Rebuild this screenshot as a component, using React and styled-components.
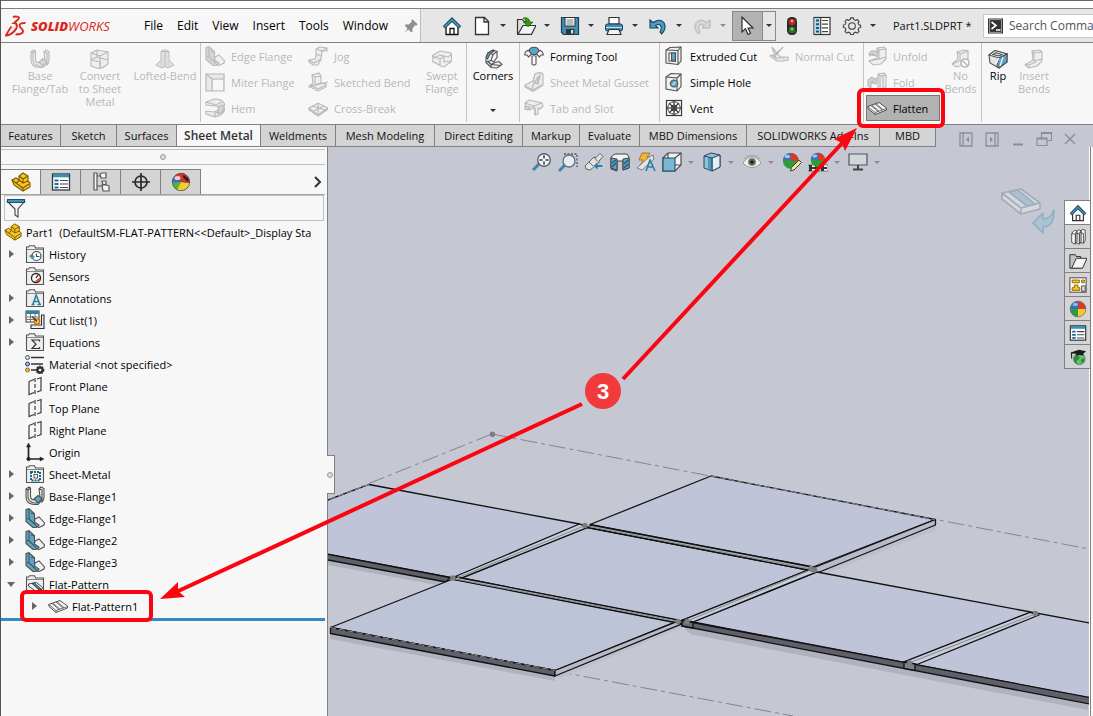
import React from 'react'
import styled, { createGlobalStyle } from 'styled-components'

const LINE = '#808080'
const VIEW = '#c5c8d2'

/* ---------- icons, all on a 20 x 20 grid ---------- */

const icons = {
  home: <g><path d="M4 10v8.500h12V10L10 5z" fill="#fff" stroke="currentColor" strokeWidth="1.300" /><path d="M8 18v-5.500h4V18" fill="none" stroke="currentColor" strokeWidth="1.300" /><path d="M2 11.500L10 3.500l8 8" fill="none" stroke="#1c4f68" strokeWidth="3.600" /><path d="M2.500 11L10 3.700l7.500 7.300" fill="none" stroke="#4f9dc0" strokeWidth="1.400" /></g>,
  page: <path d="M3.500 1.500h9l4 4v13h-13zM12 1.500V6h4.500" fill="#fff" stroke="currentColor" strokeWidth="1.300" />,
  open: <g><path d="M1.500 18V3.500h5l1.500 2h5V18z" fill="#ddd" stroke="currentColor" strokeWidth="1.200" /><path d="M2 18.300L7 9.500h13l-4.500 8.800z" fill="#f4f4f4" stroke="currentColor" strokeWidth="1.200" /><path d="M7 2c4-1 6.500.5 7 4h3l-5 5-4.500-5H10c0-2-1-3-3-4z" fill="#2e9a10" stroke="#145c05" strokeWidth=".6" /></g>,
  save: <g><path d="M1.500 1.500h17v17h-15l-2-2z" fill="#3f8fb8" stroke="#1b3c50" strokeWidth="1.200" /><rect x="5" y="1.500" width="10" height="8.500" fill="#fff" stroke="#333" /><path d="M6.500 4h7M6.500 6h7M6.500 8h7" stroke="#777" /><rect x="6" y="13" width="8.500" height="5.500" fill="#333" /><rect x="11" y="14" width="2.200" height="3.500" fill="#ddd" /></g>,
  print: <g><path d="M5 8V1.500h10V8z" fill="#fff" stroke="#333" strokeWidth="1.200" /><rect x="1.500" y="8" width="17" height="7" rx="2" fill="#3f8fb8" stroke="#1b3c50" /><path d="M2 11.500h16" stroke="#bfe2f0" /><path d="M5 13.500h10l2 5H3z" fill="#f4f4f4" stroke="#333" strokeWidth="1.200" /></g>,
  undo: <path d="M2 4v8h8L7.500 9.500C12 7 15 10 12 16l1.500 2C20 12 17 3 9 4.500L5 6.500z" fill="#4a9cc4" stroke="#16435c" strokeWidth="1.100" />,
  redo: <path d="M18 4v8h-8l2.500-2.500C8 7 5 10 8 16l-1.500 2C0 12 3 3 11 4.500l4 2z" fill="#d6d6d6" stroke="#b2b2b2" />,
  cursor: <path d="M5 1v15l3.500-3.300L11 18.500l2.500-1.200L11 12h5z" fill="#fff" stroke="#222" strokeWidth="1.100" />,
  light: <g><rect x="5" y="1" width="10" height="18" rx="4.500" fill="#2b2b2b" /><circle cx="10" cy="6" r="3.300" fill="#c22a1c" /><circle cx="10" cy="5" r="1.300" fill="#ff9b8c" /><circle cx="10" cy="14" r="3.300" fill="#2d7a1f" /><circle cx="10" cy="13" r="1.200" fill="#8fdc76" /></g>,
  options: <g><rect x="2" y="1.500" width="16" height="17" fill="#fff" stroke="#333" strokeWidth="1.200" /><rect x="2.500" y="2" width="6" height="16" fill="#b8d9e8" /><path d="M4 4.500h3M4 8.200h3M4 11.900h3M4 15.600h3" stroke="#14577a" strokeWidth="2" /><path d="M10 4.500h6M10 8.200h6M10 11.900h6M10 15.600h6M8.700 2v16" stroke="#444" strokeWidth="1.200" /></g>,
  gear: <g fill="none" stroke="#444" strokeWidth="1.200" transform="translate(1 1) scale(.9)"><path d="M8.500 1h3l.5 2 2 .8 1.800-1 2 2-1 1.800.8 2 2 .4v2.600l-2 .6-.8 2 1 1.700-2 2-1.800-1-2 .8-.5 1.800h-3l-.5-1.800-2-.8-1.800 1-2-2 1-1.800-.8-2-2-.5V9l2-.5.8-2-1-1.800 2-2 1.800 1 2-.8z" /><circle cx="10" cy="10" r="3.700" /></g>,
  pin: <path d="M11.500 2.500l6 5.500-1.500 1.500-1.500-.3-3 3.800.2 3-1.500 1L7 13.800 3 17.500l3-4.600L3 9.500 4.500 8l3 .2L11 5l-.7-1.500z" fill="#8f8f8f" />,
  prompt: <g><rect x="1" y="2.500" width="15" height="15" fill="#333" /><rect x="2.300" y="3.800" width="12.400" height="12.400" fill="#333" stroke="#fff" strokeWidth=".5" /><path d="M4.500 6l4.500 3.500L4.500 13M9 14h4.500" fill="none" stroke="#fff" strokeWidth="1.600" /></g>,
  base: <g fill="#eee" stroke="currentColor" strokeWidth="1.100"><path d="M1 3l3-2 1.500 1v8c0 2 1.500 4 4.500 4l3-3 4 3-4 4.500H9C4 18 1 15 1 11z" /><path d="M1 3l2 1v7c0 3 2 5 6 6h4" fill="none" /><path d="M14 3l2-2 3 1.500V11c0 2-1 4-2 5v-3l-2-2z" /><path d="M14 3l3 1v8M5.500 2L3 4" fill="none" /><path d="M9 13l4-3.500 4 3-4 4.500z" fill="var(--accent)" /></g>,
  convert: <g fill="#eee" stroke="currentColor" strokeWidth="1.100"><path d="M1 4l6-3 11 2v12l-6 4-2-1v-5l-9-2z" /><path d="M1 4l9 3 8-4M10 7v11M1 11l6-3 11 3M7 1v7" fill="none" /><path d="M1 12v5l9 3v-6" /></g>,
  loft: <g fill="#e2e2e2" stroke="currentColor" strokeWidth="1"><path d="M6 2.500h8V11l5 5-6 3-3-1.500L7 19l-6-3 5-5z" /><path d="M6 2.500c1-2 7-2 8 0M10 3v14" fill="none" /><path d="M7 3l-2 14h3zM13 3l2 14h-3z" fill="var(--accent)" stroke="none" /></g>,
  edge: <g stroke="currentColor" strokeWidth="1.100"><path d="M10 11l4-2 5.500 6-.5 2-5 2.500-5-3z" fill="#f1f1f1" /><path d="M1 1.500L4 .7l5.500 5V14l4.500 3-2 2.300-4 .2-7-6z" fill="var(--accent)" /><path d="M4 1v10l5.500 5L12 19M1.500 11l3-1M9.500 6L6 5" fill="none" /></g>,
  miter: <g stroke="currentColor" strokeWidth="1.200"><path d="M1 2h18v17H1z" fill="#e9e9e9" /><path d="M1 2l6 5h12M7 7v12" fill="none" /><path d="M8 8h10v10H8z" fill="var(--paper)" stroke="none" /></g>,
  hem: <g stroke="currentColor" strokeWidth="1.100"><path d="M1 4l8-3c7 0 11 3 11 8s-4 9-10 10L1 16v-3l8 1c5-1 6-5 2-6L1 7z" fill="#ececec" /><path d="M1 4l10 3 6-3M10 19v-4c8-1 9-5 7-8" fill="none" /><path d="M14 8l4-1c2 4-1 8-5 9z" fill="var(--accent)" /></g>,
  jog: <g stroke="currentColor" strokeWidth="1.100" fill="#eee"><path d="M8 3l4-2 7 1v3h-5l-1 8-3 6H5l-4-3v-2l6-1 1-3z" /><path d="M8 3l6 2M8 8l5 2M1 14l5 3 7-4M14 5l5-3" fill="none" /></g>,
  bend: <g stroke="currentColor" strokeWidth="1.100" fill="#eee"><path d="M4 3l7-2 2 3v7l5 1v3l-8 4-8-4v-2l3-1z" /><path d="M4 3l3 2 6-1M7 5v8l6-2M2 13l8 4 8-4M0 15l20-5" fill="none" /></g>,
  cross: <g stroke="currentColor" strokeWidth="1.100" fill="#eee"><path d="M1 10l9-5 10 5-10 7z" /><path d="M1 10v2l9 6 10-7v-1M10 5v12M4 8l13 4M16 8L6 13" fill="none" /></g>,
  swept: <g stroke="currentColor" strokeWidth="1.100" fill="#eee"><path d="M0 7l8-5 11 2 1 8-8 6-3-1-9-5z" /><path d="M0 7l8 3 4-3 4 1 4-3M8 10v7M12 7v6l8-1M0 10l8-4 4 1" fill="none" /></g>,
  corners: <g stroke="currentColor" strokeWidth="1.100"><path d="M5 4l5-3 4 1.500L10 5.500l-2 6 4 2 4-1 3 3-5 3.500-6-.5-5-5V9z" fill="#f0f0f0" /><path d="M10 5.500L7 4.500M8 11.500l-5 1.500M12 13.500l-4 2M8 15.500l-3-3M8 15.500V18M8 15.500l10 1M14 2.500v6l-3 4" fill="none" /><path d="M3 8l2-4 5-3 1 1-4 3-2.500 5z" fill="var(--accent)" /></g>,
  forming: <g stroke="currentColor" strokeWidth="1.100"><path d="M.7 9c0-3 2.300-5 5-4.500L8 8l-2 1.500-1.500 1.500L3 9zM19.300 9c0-3-2.300-5-5-4.500L12 8l2 1.500 1.500 1.500L17 9z" fill="#f5f5f5" /><path d="M5 5c1-5 9-5 10 0l-3 3.500H8z" fill="var(--accent)" /><path d="M8 10.500c1-1 3-1 4 0V18c-1 1.300-3 1.300-4 0z" fill="#fafafa" /></g>,
  gusset: <g stroke="currentColor" strokeWidth="1.100"><path d="M1 13l8-4 2-7 5-2 3 2v11l-9 6H8l-7-4z" fill="#eaeaea" /><path d="M8 19l1-6 7-9v-3M1 14l8 4 9-5M9 9l5 2 2-7" fill="none" /><path d="M10 11l4-6v7z" fill="var(--accent)" /></g>,
  slot: <g stroke="currentColor" strokeWidth="1.100"><path d="M1 5l4-3 13 3 1 3-3 3-2-1v6l-3 1v-7l-2-1-3 3-4-2z" fill="#eee" /><path d="M1 5l9 3 8-3M10 8v4M11 17v-6" fill="none" /><path d="M1 8l5 1-2 3-3-1z" fill="var(--accent)" /></g>,
  cut: <g stroke="currentColor" strokeWidth="1.100"><path d="M2 4l4-2.500 11-.5V15l-3 3.500L2 17z" fill="#f1f1f1" /><path d="M2 4l12 .500v14M14 4.500L17 1" fill="none" /><path d="M5 7h6.500v8.500L5 15z" fill="#fff" /><path d="M7.500 7h4v7l-4 .5z" fill="var(--accent)" /></g>,
  hole: <g stroke="currentColor" strokeWidth="1.100"><path d="M2 5l5-3.500L17 2v12.500L13 19 2 17z" fill="#f1f1f1" /><path d="M2 5l11 1v13M13 6l4-4" fill="none" /><ellipse cx="10" cy="11.500" rx="3.700" ry="3.500" fill="var(--accent)" /><path d="M8.500 13l3-3" stroke="#d3ecf6" /></g>,
  vent: <g stroke="#3a3a3a" fill="none"><rect x="2.500" y="2.500" width="15" height="15" strokeWidth="1.200" fill="#fff" /><circle cx="10" cy="10" r="6.200" /><circle cx="10" cy="10" r="3" /><path d="M10 3v14M3 10h14M5 5l10 10M15 5L5 15" strokeWidth="1.200" /></g>,
  normal: <g stroke="currentColor" strokeWidth="1.200" fill="#eee"><path d="M3 1l8 10h8v3l-5 1H8L1 10l2-1 4 3z" /><path d="M11 4l-7 6M14 1L7 9M8 12h8" fill="none" /></g>,
  unfold: <g stroke="currentColor" strokeWidth="1.100" fill="#eee"><path d="M10 2l7-1 2 2v10l-5 5-8 1-4-4 8-3z" /><path d="M10 2l2 2v9l7-2M12 4l7-1M2 15l10-2" fill="none" /><path d="M2 8c2-4 5-4 7-2l2-1-1 5-5-1 2-1c-2-1-3 0-4 2z" fill="var(--accent)" /></g>,
  fold: <g stroke="currentColor" strokeWidth="1.100" fill="#eee"><path d="M11 2l6-1 2 2v12l-5 3h-4l1-3z" /><path d="M11 2l2 2v13M13 4l6-1M16 4v12" fill="none" /><path d="M1 14V8l4-3 2 2 3-1-1 6-4-1 2-2-3 1v6z" fill="var(--accent)" /></g>,
  nobend: <g stroke="currentColor" strokeWidth="1.100" fill="#eee"><path d="M6 3l7-2 4 1v9l-5 5-7 2-4-3 6-5z" /><path d="M6 3l3 2v7l8-2M9 5l8-3M1 15l7-3" fill="none" /><circle cx="14" cy="14" r="4" fill="#fff" strokeWidth="1.600" /><path d="M11 11l6 6" strokeWidth="1.600" /></g>,
  insbend: <g stroke="currentColor" strokeWidth="1.100" fill="#eee"><path d="M8 2l8-1 2 2v9l-5 5-8 2-4-3 8-5z" /><path d="M8 2l2 2v8l8-2M10 4l8-1M1 15l4 1 7-3M5 16v3" fill="none" /></g>,
  rip: <g stroke="currentColor" strokeWidth="1.100"><path d="M1 6l6-4.500L19 5v8l-8 6-9-5z" fill="#e4e4e4" /><path d="M1 6l6-4.500L19 5l-8 4z" fill="#fafafa" /><path d="M5 5.500l3-2 6 2-3 1.500z" fill="#d4d4d4" /><path d="M11 9l8-4v8l-8 6-2-3z" fill="var(--accent)" /><path d="M11 9l-3 6M15 8l-3 9" fill="none" stroke="#fff" /></g>,
  flat: <g stroke="currentColor"><path d="M.7 8.500L12 4.500l7.500 5.500v2L8 16.500 1 10.500z" fill="#f7f7f7" /><path d="M8 14.500l11.500-4M.7 8.500L8 14.500v2M4 7.500l7 6M5 7.200l7 6M8 6l7 6M9 5.600l7 6" fill="none" strokeWidth=".8" /></g>,
  part: <g stroke="#7a5600" strokeWidth="1.100"><path d="M1 8l4-2 3 2V4l4-3 5 3v5l2 2v4l-7 4-9-6z" fill="#f6c622" /><path d="M5 11l7 5 6-4M12 16v3M12 7l5-3M12 7v4l5-2M8 4l4 3M1 8l4 3 3-2M12 11l-4-3" fill="none" /></g>,
  sheet: <g><rect x="1.500" y="2" width="17" height="16" fill="#fff" stroke="#2b3a42" strokeWidth="1.300" /><path d="M2 3.800h16" stroke="#3e8cb0" strokeWidth="3" /><path d="M3.500 8.500h4M3.500 12h4M3.500 15.500h4" stroke="#1e6d94" strokeWidth="2" /><path d="M9 8.500h8M9 12h8M9 15.500h8" stroke="#444" strokeWidth="1.200" /></g>,
  config: <g fill="#f4f4f4" stroke="#555" strokeWidth="1.200"><path d="M3 1h3v17H3zM6 4h4M6 14h5" /><path d="M9 2l2-1h4v5h-5zM11 9h4v3l-3 1zM11 13h5l2 1v5h-6z" /></g>,
  target: <g fill="none" stroke="#2a2a2a" strokeWidth="1.700"><circle cx="10" cy="10" r="6" /><path d="M10 1v18M1 10h18" /></g>,
  ball: <g><circle cx="10" cy="10" r="8.700" fill="#eaeaea" /><path d="M10 10V1.300A8.700 8.700 0 0118.700 10z" fill="#d63a2a" /><path d="M10 10H1.300A8.700 8.700 0 0110 1.300z" fill="#2c6fc4" /><path d="M10 10v8.700A8.700 8.700 0 011.300 10z" fill="#2e9c38" /><path d="M10 10h8.700A8.700 8.700 0 0110 18.700z" fill="#f2cc2c" /><ellipse cx="7" cy="5" rx="3" ry="2" fill="#fff" opacity=".5" /><circle cx="10" cy="10" r="8.700" fill="none" stroke="#444" strokeWidth=".6" /></g>,
  display: <g><circle cx="10" cy="10" r="8.700" fill="#2d5fae" /><path d="M10 10L3 4.500A9 9 0 0114 2z" fill="#d23b30" /><path d="M10 10L3 4.500A9 9 0 001.500 11z" fill="#3a6fc0" /><path d="M10 10L1.500 10.500A9 9 0 006 17.700z" fill="#57b33a" /><path d="M10 10l-4 7.700A8.800 8.800 0 0018.500 11z" fill="#f3cf2b" /><path d="M12 1.600A8.800 8.800 0 0118.600 11L10 10z" fill="#c9352b" /><path d="M12.500 3l5 4-.5 3-5-5z" fill="#201c1c" /><ellipse cx="6.500" cy="6" rx="3" ry="2" fill="#fff" opacity=".75" /><circle cx="10" cy="10" r="8.700" fill="none" stroke="#444" strokeWidth=".6" /></g>,
  funnel: <g stroke="#444" strokeWidth="1.100"><path d="M1.500 3.500h17L12 11v8l-3-2v-6z" fill="#f5f5f5" /><path d="M1.500 1.500h17v3h-17z" fill="#3f92b8" stroke="#1b5270" /></g>,
  material: <g><path d="M6 3.500h13M6 10h12M6 16h6" stroke="#333" strokeWidth="1.500" /><circle cx="2.500" cy="3.500" r="2" fill="#ddd" stroke="#555" /><circle cx="2.500" cy="10" r="2" fill="#8fc6df" stroke="#336" /><circle cx="2.500" cy="16" r="2" fill="#f4c32b" stroke="#864" /><circle cx="15" cy="16" r="3.700" fill="#333" strokeDasharray="1.500 1.200" stroke="#333" strokeWidth="1.400" /><circle cx="15" cy="16" r="1.300" fill="#fff" /></g>,
  plane: <g fill="none" stroke="#3c3c3c" strokeWidth="1.200"><path d="M4 5.500L9 3.500M12 3l4-1.500v13l-4 1.500M9 16.500L4 18.500v-13" /><path d="M10 2v17" strokeDasharray="4 2" /></g>,
  origin: <g stroke="#222" fill="#222"><path d="M3.500 3v14H17" fill="none" strokeWidth="1.700" /><path d="M1.500 5l2-4 2 4zM15 15l4 2-4 2z" strokeWidth=".5" /><circle cx="3.500" cy="17" r="1.600" /></g>,
  cutlist: <g><rect x="1" y="1" width="13" height="11" fill="#fff" stroke="#333" /><path d="M1 2.500h13" stroke="#2f82aa" strokeWidth="3" /><path d="M1 7h13M1 9.500h13M5.500 4v8M10 4v8" stroke="#777" /><path d="M6 15v3.500h13V5h-2.500v10z" fill="#eee" stroke="#333" strokeWidth="1.100" /><circle cx="12" cy="11.500" r="2.700" fill="#f7d33b" stroke="#c46e14" strokeWidth="1.200" /><path d="M7 6.500l5 5" stroke="#333" strokeWidth="1.200" /></g>,
  zoomfit: <g><path d="M1 18l6-6" stroke="#3c84a8" strokeWidth="3" /><circle cx="12" cy="8" r="6.300" fill="#f1f5f8" stroke="#56616a" strokeWidth="1.400" /><path d="M12 3.500v3M12 9.500v3M7.500 8h3M13.500 8h3" stroke="#333" strokeWidth="1.500" /></g>,
  zoomarea: <g><path d="M6 2h13v13" fill="none" stroke="#555" strokeWidth="1.300" strokeDasharray="2 1.500" /><path d="M1 19l6-6" stroke="#3c84a8" strokeWidth="3" /><circle cx="11" cy="9" r="6" fill="#e4edf2" stroke="#67717a" strokeWidth="1.400" /></g>,
  prev: <g><path d="M1 14l9-9 2 .500 4-4 3 3-4 4.500v2l-9 7-4-1z" fill="#e2e2e2" stroke="#666" /><path d="M10 5l5 6M5 10l5 5" stroke="#666" /><path d="M9 14l5-4.500v3h5v3h-5v3z" fill="#317fa8" stroke="#e8eef4" strokeWidth=".6" /></g>,
  section: <g stroke="#444"><path d="M1 5l4-3h12l2 3v11l-6 2V9H7v10l-6-2z" fill="#f2f2f2" /><path d="M1 6l6 1v11l-6-2zM13 7l6-1v10l-6 2z" fill="#5da5c6" /><path d="M2 11l4-3M2 15l4-4M14 12l4-4M14 16l4-4" stroke="#1c5674" strokeWidth="1.300" /></g>,
  dynamic: <g><path d="M6 1h8l-3 4h4L4 14l3-6H3z" fill="#f3b33c" stroke="#a2660e" strokeWidth=".8" /><path d="M1 16l12-11 4-2 1 4L6 18z" fill="#e5e5e5" stroke="#666" strokeWidth=".8" /><path d="M10 19l4-11 5 11M11.500 15h6" fill="none" stroke="#2d7da5" strokeWidth="1.600" /></g>,
  orient: <g><path d="M1 6l5-5h13v12l-6 6H1z" fill="#f4f4f4" stroke="#444" strokeWidth="1.100" /><path d="M13 6l6-5M6 1v5M13 13h6" stroke="#444" strokeWidth="1.100" /><path d="M1 6h12v13H1z" fill="#7ab7d3" stroke="#1e4d66" strokeWidth="1.100" /></g>,
  style: <g stroke="#345"><path d="M2 4l7-3 9 2v12l-8 4-8-3z" fill="#8cc3da" /><path d="M10 6l8-3v12l-8 4z" fill="#dff0f7" /><path d="M6 5l4 1v13l-4-2z" fill="#4d98bd" stroke="none" /><path d="M10 6v13M2 4l8 2" /></g>,
  eye: <g><path d="M1 11c5-8 13-8 18 0-5 6-13 6-18 0z" fill="#eee" stroke="#888" strokeWidth=".8" /><path d="M2 7c5-5 11-5 16 0" fill="none" stroke="#a5a5a5" /><circle cx="10" cy="10" r="3.800" fill="#666" /><circle cx="10" cy="10" r="1.600" fill="#111" /></g>,
  edit: <g><g transform="scale(.88)"><circle cx="10" cy="10" r="9" fill="#2e9c38" /><path d="M10 10L1 9a9 9 0 019-8z" fill="#3a72c4" /><path d="M10 10V1a9 9 0 019 9z" fill="#d63a2a" /><ellipse cx="6" cy="5" rx="3" ry="2" fill="#fff" opacity=".6" /></g><path d="M17 8l2.500 2.500-7.500 7.500-3.500 1 1-3.500z" fill="#f4e29c" stroke="#444" /></g>,
  scene: <g><path d="M0 13h20v6H0z" fill="#fff" stroke="#333" strokeWidth=".6" /><path d="M1 13h3v2h3v-2h3v2h3v-2h3v2h3v2h-3v2h-3v-2h-3v2H7v-2H4v2H1z" fill="#333" /><g transform="translate(2 0) scale(.8)"><circle cx="10" cy="10" r="9" fill="#2e9c38" /><path d="M10 10L1 9a9 9 0 019-8z" fill="#3a72c4" /><path d="M10 10V1a9 9 0 019 9z" fill="#d63a2a" /><ellipse cx="6" cy="5" rx="3" ry="2" fill="#fff" opacity=".6" /></g></g>,
  monitor: <g stroke="#555" strokeWidth="1.200"><path d="M1 2h18v11H1z" fill="#d0d6dc" /><path d="M10 13v4M5 17.500h10" strokeWidth="2" stroke="#444" /></g>,
  books: <g fill="#fafafa" stroke="#444"><path d="M3 6l3-3.500 3 1V15l-2 3-4-2zM7.500 5.500l3-3.500 3 1v12l-2 3-4-2zM12 5l3-3.500 3 1V14l-2 3-4-1z" /><path d="M3 6l4 1v11M7.500 5.500l4 1V18M12 5l4 1v11" fill="none" /></g>,
  folder: <g stroke="#333" strokeWidth="1.100"><path d="M1 18V3h6l1 2h5v13z" fill="#c4c4c4" /><path d="M3 18L8 7h12l-5 11z" fill="#f4f4f4" /></g>,
  palette: <g><rect x="1" y="2" width="18" height="16" fill="#fff" stroke="#555" strokeWidth="1.200" /><path d="M3.500 4.500h8v3h-8zM14 4.500h3v3h-3zM6 10h4v3h2v3H3.500v-3H6z" fill="#f3c422" stroke="#8b6500" /><path d="M14 11h4v6h-4z" fill="#ddd" stroke="#444" /></g>,
  globe: <g><circle cx="11.500" cy="12" r="6.500" fill="#6cc06a" stroke="#2a6c7a" strokeWidth=".7" /><path d="M9 8c3 1 4 4 1 5s-1 4 0 5c-3 0-5-4-5-6s2-3 4-4zM13 13l4-2v4l-3 2z" fill="#2d8a3b" /><path d="M2 5l9-3 8 1.500-3 2.500v2.500c-3-1-6-1-8 .5V6.500L3.500 6v6H2.500z" fill="#1b1b1b" /></g>,
  paneLeft: <g fill="none" stroke="#8b8e98" strokeWidth="1.300"><path d="M4 4h12v13H4zM7 4v13" /><path d="M13 7.500v6l-3-3z" fill="#8b8e98" stroke="none" /></g>,
  paneRight: <g fill="none" stroke="#8b8e98" strokeWidth="1.300"><path d="M4 4h12v13H4zM13 4v13" /><path d="M8 7.500v6l3-3z" fill="#8b8e98" stroke="none" /></g>,
  minimize: <path d="M5 15.500h10" stroke="#8b8e98" strokeWidth="2" />,
  restore: <path d="M7.500 8.500v-5h10v8h-4M3 9h10v7.500H3zM3 10h10M7.500 4.500h10" fill="none" stroke="#8b8e98" strokeWidth="1.200" />,
  close: <path d="M5 5l10 10M15 5L5 15" stroke="#8b8e98" strokeWidth="1.400" />,
  chevron: <path d="M10 5l5 5-5 5" fill="none" stroke="#333" strokeWidth="2" />,
}

/* tree folders share one body and differ in what lies inside */
const folderMarks = {
  history: <g fill="#fff" stroke="#3a4a55" strokeWidth="1.200"><circle cx="11.500" cy="12" r="4.500" /><path d="M11.500 9.500v3h3" fill="none" /><path d="M4 12l3-2 3 3-3 2z" fill="#3d8fb6" stroke="none" /></g>,
  sensors: <g fill="#fff" stroke="#222" strokeWidth="1.300"><circle cx="11" cy="12" r="4.500" /><path d="M11 12l2-3" /><path d="M11 15.500l4-3" stroke="#e04a1c" strokeWidth="2" /></g>,
  notes: <path d="M6.500 16.500h3M12.500 16.500h3.500M8 16l3.200-9 3.500 9M9.500 13.500h4" fill="none" stroke="#2f7fa5" strokeWidth="1.600" />,
  equations: <path d="M14.500 9.500V8H7l4 4.200L7 16.500h7.500V15" fill="none" stroke="#333" strokeWidth="1.200" />,
  metal: <g><rect x="6" y="8" width="9" height="8.500" fill="#f4f4f4" stroke="#1e6484" strokeWidth="2" strokeDasharray="2 1" /><rect x="9" y="10.500" width="3.500" height="3.500" fill="#fff" stroke="#333" strokeWidth=".8" /></g>,
  flatfolder: <g stroke="#333" strokeWidth=".9"><path d="M3.500 10l8-1.500 6 5-1 2.500-6 1-7-5z" fill="#f4f4f4" /><path d="M7 9.500l7 6.500 2.500-.500-7-6.500z" fill="#3a8cb2" /></g>,
}

const Svg = styled.svg`
  display: block;
  flex: none;
  width: ${p => p.$size}px;
  height: ${p => p.$size}px;
`

const Icon = ({ name, size = 20 }) => (
  <Svg viewBox="0 0 20 20" $size={size} aria-hidden="true">
    {folderMarks[name] ? (
      <g>
        <path d="M1.500 18.500V3h2l1-1.300h5l1 2.300h8v14.500z" fill="#eee" stroke="#555" strokeWidth="1.100" />
        <path d="M2 5.500h16" stroke="#888" />
        {folderMarks[name]}
      </g>
    ) : icons[name]}
  </Svg>
)

/* ---------- data ---------- */

const menus = ['File', 'Edit', 'View', 'Insert', 'Tools', 'Window']

const tabs = [
  ['Features', 60], ['Sketch', 56], ['Surfaces', 60], ['Sheet Metal', 84], ['Weldments', 75],
  ['Mesh Modeling', 99], ['Direct Editing', 88], ['Markup', 57], ['Evaluate', 60],
  ['MBD Dimensions', 107], ['SOLIDWORKS Add-Ins', 133], ['MBD', 56],
]

const tree = [
  { label: 'History', icon: 'history', open: false },
  { label: 'Sensors', icon: 'sensors' },
  { label: 'Annotations', icon: 'notes', open: false },
  { label: 'Cut list(1)', icon: 'cutlist', open: false },
  { label: 'Equations', icon: 'equations', open: false },
  { label: 'Material <not specified>', icon: 'material' },
  { label: 'Front Plane', icon: 'plane' },
  { label: 'Top Plane', icon: 'plane' },
  { label: 'Right Plane', icon: 'plane' },
  { label: 'Origin', icon: 'origin' },
  { label: 'Sheet-Metal', icon: 'metal', open: false },
  { label: 'Base-Flange1', icon: 'base', open: false },
  { label: 'Edge-Flange1', icon: 'edge', open: false },
  { label: 'Edge-Flange2', icon: 'edge', open: false },
  { label: 'Edge-Flange3', icon: 'edge', open: false },
  { label: 'Flat-Pattern', icon: 'flatfolder', open: true },
  { label: 'Flat-Pattern1', icon: 'flat', open: false, child: true },
]

const viewTools = [
  ['zoomfit'], ['zoomarea'], ['prev'], ['section'], ['dynamic'], ['orient', 1],
  ['style', 1], ['eye', 1], ['edit'], ['scene', 1], ['monitor', 1],
]

/* ---------- parts ---------- */

const BigButton = ({ icon, lines, disabled, width, menu }) => (
  <Big disabled={disabled} $width={width}>
    <Icon name={icon} />
    <span>{lines.map(l => <React.Fragment key={l}>{l}<br /></React.Fragment>)}</span>
    {menu && <BigCaret><Caret /></BigCaret>}
  </Big>
)

const SmallButton = ({ icon, label, disabled, pressed }) => (
  <Small disabled={disabled} $pressed={pressed} aria-pressed={pressed}>
    <Icon name={icon} />{label}
  </Small>
)

const Model = () => (
  <Scene viewBox="328 147 761 569" preserveAspectRatio="xMinYMin slice" aria-hidden="true">
    <g fill="none" stroke="#85868c" strokeDasharray="17 4 4 4">
      <path d="M492 434L328 500" />
      <path d="M492 434L1089 549" />
      <path d="M555 671L793 716" />
    </g>
    <g fill="#afb3be">
      <path d="M328 560l117 22-8 3-109-20z" />
      <path d="M330 634l225 42v5L330 639z" />
      <path d="M684 627l404 77v6L690 634z" />
      <path d="M936 525v5l-114 45-5-2z" fill="#bcc0cb" />
      <path d="M555 676l126-53 4 3-124 52z" fill="#bcc0cb" />
    </g>
    <g stroke="#111" strokeWidth="1.300" strokeLinejoin="round">
      <path d="M320 503L369 484.500 579.500 524 585 526 453 578 320 553z" fill="#bfc4d8" />
      <path d="M320 552.700L450 577.500 446 582 320 558.500z" fill="#5f6069" />
      <path d="M590 524.500L711 476 935 519.500 813 567z" fill="#c0c4d9" />
      <path d="M813 568L935.500 519.500V525L817 573z" fill="#b8bac6" />
      <path d="M587 527.500L808 570 680 621 462 578z" fill="#bec3d8" />
      <path d="M591 525L812 567 808 570 588 527.500z" fill="#b5b8c5" />
      <path d="M579.500 524L588 527.300 462 577.800 454 577z" fill="#c9ccda" />
      <path d="M453 579L330.500 627.500 555 670.500 675 622z" fill="#bec4d8" />
      <path d="M456 577L678 620 675 622.500 454 579.500z" fill="#b5b8c5" />
      <path d="M330.500 627.500L555 670.500v5.500L330.500 633.500z" fill="#5f6069" />
      <path d="M555 670.500L676 621.800l6 2L555 676z" fill="#b8bac6" />
      <path d="M817 572L1095 624V699L693 622z" fill="#bfc4d9" />
      <path d="M808 570L817 571.800 693 622 683 620z" fill="#c9ccda" />
      <path d="M1030 612.300L1039 615 917 664.500 904 661.800z" fill="#c9ccda" />
      <path d="M682 620.500L1095 698.500V705L682 626z" fill="#5f6069" />
      <path d="M904 662l11 2v6.300l-11-2z" fill="#7f8088" />
      <path d="M682 620.500l11 2v5.500l-11-2z" fill="#6c6d75" />
    </g>
    <g fill="none" stroke="#87888d">
      <path d="M584 526L457 578M813 569L687 621M1035 614L909 663M589 526.500L811 569M455 579L677 621" />
      <path d="M369 484.500L328 500M330 627.500L555 670.500M711 476L935 519.500" strokeDasharray="6 3" />
    </g>
    <g fill="#7c7d7f">
      {[[492.5, 434.3], [585, 525.5], [453, 578], [678, 621.5], [687, 621.5], [811, 568.5], [814.5, 570], [1035.5, 613.5], [909.5, 663]].map(([x, y]) => (
        <circle key={x} cx={x} cy={y} r="2.700" />
      ))}
    </g>
  </Scene>
)

const App = () => {
  return (
    <Shell>
      <Global />
      <TitleStrip />
      <MenuBar>
        <Brand>
          <Logo viewBox="0 0 22 22" aria-hidden="true">
            <path d="M8 2c2-.8 6-.6 6 .8S11 6.500 9 8c4 0 3.500 5 .5 8S4 20.500 1 20.500c1.500-3 3-6 5.500-9M20.500 8c-3-.3-6 .5-6 2.500 0 2.500 4 3.500 3.500 6S14 19.500 10.500 19.500" fill="none" stroke="#d9281e" strokeWidth="1.900" />
          </Logo>
          <b>SOLID</b>WORKS
        </Brand>
        <Menus>
          {menus.map(m => <MenuItem key={m}>{m}</MenuItem>)}
          <Plain aria-label="Pin"><Icon name="pin" size={18} /></Plain>
        </Menus>
        <QuickBar>
          <HomeButton aria-label="Home"><Icon name="home" /></HomeButton>
          <QuickTools>
            {['page', 'open', 'save', 'print', 'undo', 'redo'].map(n => (
              <QuickTool key={n} aria-label={n} disabled={n === 'redo'}>
                <Icon name={n} /><Caret $dim={n === 'redo'} />
              </QuickTool>
            ))}
          </QuickTools>
          <SelectTool aria-label="Select">
            <span><Icon name="cursor" /></span><i><Caret /></i>
          </SelectTool>
          <RightTools>
            <Plain aria-label="Rebuild"><Icon name="light" /></Plain>
            <Plain aria-label="File properties"><Icon name="options" /></Plain>
            <QuickTool aria-label="Options"><Icon name="gear" /><Caret /></QuickTool>
          </RightTools>
          <DocName>Part1.SLDPRT *</DocName>
          <Search>
            <Icon name="prompt" />
            <input type="text" aria-label="Search Commands" placeholder="Search Commands" />
          </Search>
        </QuickBar>
      </MenuBar>

      <Ribbon>
        <Group $pad={9}>
          <BigButton icon="base" lines={['Base', 'Flange/Tab']} width={60} disabled />
          <BigButton icon="convert" lines={['Convert', 'to Sheet', 'Metal']} width={60} disabled />
          <BigButton icon="loft" lines={['Lofted-Bend']} width={70} disabled />
        </Group>
        <Group $pad={3}>
          <Stack $width={103}>
            <SmallButton icon="edge" label="Edge Flange" disabled />
            <SmallButton icon="miter" label="Miter Flange" disabled />
            <SmallButton icon="hem" label="Hem" disabled />
          </Stack>
          <Stack $width={111}>
            <SmallButton icon="jog" label="Jog" disabled />
            <SmallButton icon="bend" label="Sketched Bend" disabled />
            <SmallButton icon="cross" label="Cross-Break" disabled />
          </Stack>
          <BigButton icon="swept" lines={['Swept', 'Flange']} width={48} disabled />
        </Group>
        <Group>
          <BigButton icon="corners" lines={['Corners']} width={52} menu />
        </Group>
        <Group $pad={3}>
          <Stack $width={136}>
            <SmallButton icon="forming" label="Forming Tool" />
            <SmallButton icon="gusset" label="Sheet Metal Gusset" disabled />
            <SmallButton icon="slot" label="Tab and Slot" disabled />
          </Stack>
        </Group>
        <Group $pad={3}>
          <Stack $width={105}>
            <SmallButton icon="cut" label="Extruded Cut" />
            <SmallButton icon="hole" label="Simple Hole" />
            <SmallButton icon="vent" label="Vent" />
          </Stack>
          <Stack $width={95}>
            <SmallButton icon="normal" label="Normal Cut" disabled />
          </Stack>
        </Group>
        <Group $pad={2}>
          <Stack $width={74}>
            <SmallButton icon="unfold" label="Unfold" disabled />
            <SmallButton icon="fold" label="Fold" disabled />
            <SmallButton icon="flat" label="Flatten" pressed />
          </Stack>
          <BigButton icon="nobend" lines={['No', 'Bends']} width={41} disabled />
        </Group>
        <Group $last>
          <BigButton icon="rip" lines={['Rip']} width={32} />
          <BigButton icon="insbend" lines={['Insert', 'Bends']} width={40} disabled />
        </Group>
      </Ribbon>

      <TabRow>
        {tabs.map(([label, w]) => (
          <Tab key={label} $w={w} $active={label === 'Sheet Metal'}>{label}</Tab>
        ))}
        <WindowButtons>
          {['paneLeft', 'paneRight', 'minimize', 'restore', 'close'].map(n => (
            <Plain key={n} aria-label={n}><Icon name={n} /></Plain>
          ))}
        </WindowButtons>
      </TabRow>

      <Body>
        <Panel>
          <Grip><Dot /></Grip>
          <PanelTabs>
            {['part', 'sheet', 'config', 'target', 'display'].map((n, i) => (
              <PanelTab key={n} $active={i === 0} aria-label={n}><Icon name={n} /></PanelTab>
            ))}
            <More aria-label="More"><Icon name="chevron" /></More>
          </PanelTabs>
          <Filter>
            <Icon name="funnel" />
            <input type="text" aria-label="Filter" />
          </Filter>
          <Tree>
            <Root><Icon name="part" size={18} />Part1&nbsp; (DefaultSM-FLAT-PATTERN&lt;&lt;Default&gt;_Display Sta</Root>
            {tree.map(row => (
              <Row key={row.label} $child={row.child}>
                <Twist>{row.open !== undefined && <Arrow $open={row.open} />}</Twist>
                <Icon name={row.icon} />
                {row.label}
              </Row>
            ))}
          </Tree>
          <Handle><Dot /></Handle>
        </Panel>
        <Viewport>
          <Model />
          <ViewBar>
            {viewTools.map(([n, menu]) => (
              <ViewTool key={n} aria-label={n}>
                <Icon name={n} />
                {menu && <i><Caret $dim /></i>}
              </ViewTool>
            ))}
          </ViewBar>
          <Confirm viewBox="0 0 56 50" aria-hidden="true">
            <g fill="#d3d8e1" stroke="#a3acb9" strokeWidth="1.600" strokeLinejoin="round">
              <path d="M2 7l19-4 19 14v6L21 28 2 13z" />
              <path d="M2 7l19 15 19-5M21 22v6" fill="none" />
              <path d="M9 6l9-2 17 14-8 2z" fill="#a9c1d0" />
              <path d="M33 37l10-10v6c6 0 9-3 11-9 0 11-4 17-11 17v6z" fill="#a9c4d4" stroke="#92aebf" />
            </g>
          </Confirm>
          <TaskPane>
            {['home', 'books', 'folder', 'palette', 'ball', 'sheet', 'globe'].map((n, i) => (
              <TaskTab key={n} $active={i === 0} aria-label={n}><Icon name={n} size={18} /></TaskTab>
            ))}
          </TaskPane>
        </Viewport>
        <Edge />
      </Body>

      <Callouts viewBox="0 0 1093 716" preserveAspectRatio="xMinYMin meet">
        <g fill="none" stroke="#fb0510" strokeWidth="4">
          <rect x="859" y="90" width="84" height="36" rx="4" />
          <rect x="22" y="592" width="129" height="28" rx="4" />
          <path d="M623 379L845 140M582 404L174 593" />
        </g>
        <path d="M857 128L834 139l8 4 3 8zM160 599L178 582v9l7 6z" fill="#fb0510" />
        <circle cx="603" cy="391" r="18" fill="#f03a3c" />
        <text x="603" y="399" textAnchor="middle">3</text>
      </Callouts>
    </Shell>
  )
}

export default App

const Global = createGlobalStyle`
  * { box-sizing: border-box; }
  body {
    margin: 0;
    font-family: 'Open Sans', 'Noto Sans', sans-serif;
    font-size: 12px;
    color: #111;
  }
  button, input {
    font: inherit;
    color: inherit;
    background: none;
    border: 0;
    padding: 0;
    margin: 0;
  }
  i { font-style: normal; }
`

const Shell = styled.div`
  --accent: #5ba5c8;
  --paper: #f7f7f7;
  position: relative;
  display: flex;
  flex-direction: column;
  height: 100vh;
  overflow: hidden;
  background: #f7f7f7;
  border-left: 1px solid #555;
`

const TitleStrip = styled.div`
  flex: none;
  height: 9px;
  background: #fff;
  border-top: 1px solid #666;
  border-bottom: 1px solid ${LINE};
`

const MenuBar = styled.header`
  flex: none;
  display: flex;
  height: 34px;
  border-bottom: 1px solid ${LINE};
`

const Brand = styled.div`
  display: flex;
  align-items: center;
  width: 135px;
  padding-left: 4px;
  color: #d9281e;
  font-size: 13px;
  font-style: italic;
  b { font-weight: 800; }
`

const Logo = styled.svg`
  width: 22px;
  height: 22px;
  margin-right: 4px;
`

const Menus = styled.nav`
  display: flex;
  align-items: center;
  width: 285px;
  padding-left: 8px;
  gap: 14px;
  border-right: 1px solid #bbb;
`

const MenuItem = styled.button`
  color: #000;
`

const Plain = styled.button`
  display: flex;
  align-items: center;
  justify-content: center;
`

const QuickBar = styled.div`
  flex: 1;
  min-width: 0;
  display: flex;
  align-items: center;
  background: #e6e6e6;
`

const HomeButton = styled(Plain)`
  margin: 0 10px 0 21px;
`

const QuickTools = styled.div`
  display: flex;
  gap: 4px;
`

const Caret = styled.span`
  flex: none;
  width: 0;
  height: 0;
  border: 3px solid transparent;
  border-top-color: ${p => (p.$dim ? '#8d8d8d' : '#333')};
  border-bottom: 0;
`

const QuickTool = styled.button`
  display: flex;
  align-items: center;
  width: 40px;
  gap: 8px;
  color: #333;
`

const SelectTool = styled.button`
  display: flex;
  height: 30px;
  border: 1px solid #8a8a8a;
  > span {
    display: flex;
    align-items: center;
    padding: 0 5px 0 4px;
    background: #b2b2b2;
  }
  i {
    display: flex;
    align-items: center;
    padding: 0 3px;
    border-left: 1px solid #8a8a8a;
  }
`

const RightTools = styled.div`
  display: flex;
  gap: 10px;
  margin-left: 6px;
`

const DocName = styled.span`
  width: 90px;
  margin-left: 11px;
  font-size: 11px;
  white-space: nowrap;
`

const Search = styled.label`
  flex: 1;
  min-width: 0;
  display: flex;
  align-items: center;
  gap: 2px;
  height: 24px;
  padding-left: 3px;
  background: #fff;
  border: 1px solid #c8c8c8;
  border-right: 0;
  overflow: hidden;
  input {
    flex: none;
    width: 120px;
  }
  input::placeholder { color: #555; opacity: 1; }
`

const Ribbon = styled.div`
  flex: none;
  display: flex;
  height: 82px;
  padding-bottom: 2px;
  border-bottom: 1px solid ${LINE};
  font-size: 11px;
  line-height: 13px;
`

const Group = styled.div`
  display: flex;
  padding-left: ${p => p.$pad || 0}px;
  border-right: ${p => (p.$last ? 0 : '1px solid #c4c4c4')};
`

const Stack = styled.div`
  display: flex;
  flex-direction: column;
  width: ${p => p.$width}px;
`

const Small = styled.button`
  display: flex;
  align-items: center;
  gap: 6px;
  height: 26px;
  padding-left: 1px;
  color: #000;
  white-space: nowrap;
  background: ${p => (p.$pressed ? '#b2b2b2' : 'none')};
  outline: ${p => (p.$pressed ? '1px solid #777' : 'none')};
  outline-offset: -1px;
  svg { color: #505050; }
  &:disabled, &:disabled svg { color: #b8b8b8; --accent: #d6d6d6; }
`

const Big = styled.button`
  display: flex;
  flex-direction: column;
  align-items: center;
  width: ${p => p.$width}px;
  padding-top: 6px;
  color: #000;
  text-align: center;
  white-space: nowrap;
  svg { color: #505050; }
  &:disabled, &:disabled svg { color: #b8b8b8; --accent: #d6d6d6; }
`

const BigCaret = styled.i`
  display: flex;
  margin: auto 0 10px;
`

const TabRow = styled.div`
  flex: none;
  display: flex;
  height: 22px;
  background: ${VIEW};
`

const Tab = styled.button`
  flex: none;
  width: ${p => p.$w}px;
  text-align: center;
  white-space: nowrap;
  font-size: ${p => (p.$active ? 12 : 11)}px;
  font-weight: ${p => (p.$active ? 600 : 400)};
  color: ${p => (p.$active ? '#333' : '#111')};
  background: ${p => (p.$active ? '#f7f7f7' : '#d4d4d4')};
  border-right: 1px solid ${LINE};
  border-bottom: 1px solid ${LINE};
`

const WindowButtons = styled.div`
  display: flex;
  gap: 6px;
  margin-left: auto;
  padding: 8px 13px 0 0;
  height: 20px;
`

const Body = styled.div`
  flex: 1;
  min-height: 0;
  display: flex;
`

const Panel = styled.aside`
  position: relative;
  z-index: 1;
  flex: none;
  width: 327px;
  padding: 2px 2px 0 0;
  background: #f7f7f7;
  border-right: 1px solid ${LINE};
`

const Grip = styled.div`
  display: flex;
  align-items: center;
  justify-content: center;
  height: 16px;
  border-top: 1px solid #c0c0c0;
  border-bottom: 1px solid #c0c0c0;
`

const Dot = styled.span`
  width: 6px;
  height: 6px;
  border: 1px solid #999;
  border-radius: 50%;
  background: #ddd;
`

const PanelTabs = styled.div`
  display: flex;
  height: 26px;
  margin-top: 4px;
  border-bottom: 1px solid #a5a5a5;
`

const PanelTab = styled.button`
  display: flex;
  align-items: center;
  justify-content: center;
  width: 40px;
  background: ${p => (p.$active ? '#f7f7f7' : '#d4d4d4')};
  border-top: 1px solid ${LINE};
  border-right: 1px solid ${LINE};
`

const More = styled.button`
  margin-left: auto;
`

const Filter = styled.label`
  display: flex;
  align-items: center;
  height: 26px;
  margin: 0 1px 0 3px;
  padding-left: 1px;
  border: 1px solid #c0c0c0;
  input { flex: 1; min-width: 0; }
`

const Tree = styled.div`
  font-size: 11px;
  color: #000;
  padding-bottom: 1px;
  border-bottom: 3px solid #338bc4;
`

const Root = styled.div`
  display: flex;
  align-items: center;
  gap: 4px;
  height: 22px;
  padding-left: 3px;
  white-space: nowrap;
  overflow: hidden;
`

const Row = styled.div`
  display: flex;
  align-items: center;
  gap: 4px;
  height: 22px;
  padding-left: ${p => (p.$child ? 27 : 4)}px;
  white-space: nowrap;
  svg { color: #505050; }
`

const Twist = styled.span`
  display: flex;
  justify-content: center;
  width: 16px;
  padding-right: 4px;
`

const Arrow = styled.span`
  width: 0;
  height: 0;
  border-style: solid;
  border-width: ${p => (p.$open ? '5px 4px 0' : '4px 0 4px 5px')};
  border-color: ${p => (p.$open ? '#666 transparent transparent' : 'transparent transparent transparent #666')};
`

const Handle = styled.div`
  position: absolute;
  left: 100%;
  top: 308px;
  display: flex;
  align-items: center;
  width: 8px;
  height: 39px;
  background: #f7f7f7;
  border: 1px solid ${LINE};
  border-left: 0;
`

const Viewport = styled.main`
  position: relative;
  flex: 1;
  min-width: 0;
  background: ${VIEW};
`

const Scene = styled.svg`
  position: absolute;
  inset: 0;
  width: 100%;
  height: 100%;
`

const ViewBar = styled.div`
  position: relative;
  display: flex;
  justify-content: center;
  gap: 6px;
  padding: 5px 4px 0 0;
`

const ViewTool = styled.button`
  display: flex;
  align-items: center;
  i {
    display: flex;
    justify-content: center;
    width: 14px;
    padding-left: 4px;
  }
`

const Confirm = styled.svg`
  position: absolute;
  top: 39px;
  right: 33px;
  width: 56px;
  height: 50px;
`

const TaskPane = styled.div`
  position: absolute;
  top: 53px;
  right: -2px;
  z-index: 1;
  display: flex;
  flex-direction: column;
  width: 27px;
  border: 1px solid ${LINE};
  border-bottom: 0;
`

const TaskTab = styled.button`
  display: flex;
  align-items: center;
  justify-content: center;
  height: 24px;
  color: #333;
  background: ${p => (p.$active ? '#fff' : '#d4d4d4')};
  border-bottom: 1px solid ${LINE};
`

const Edge = styled.div`
  flex: none;
  width: 4px;
  background: #f7f7f7;
  border-left: 1px solid #fff;
  box-shadow: inset 1px 0 ${LINE};
`

const Callouts = styled.svg`
  position: absolute;
  top: 0;
  left: -1px;
  z-index: 5;
  width: 100vw;
  height: 100vh;
  pointer-events: none;
  text {
    fill: #fff;
    font: 700 22px 'Liberation Sans', sans-serif;
  }
`
